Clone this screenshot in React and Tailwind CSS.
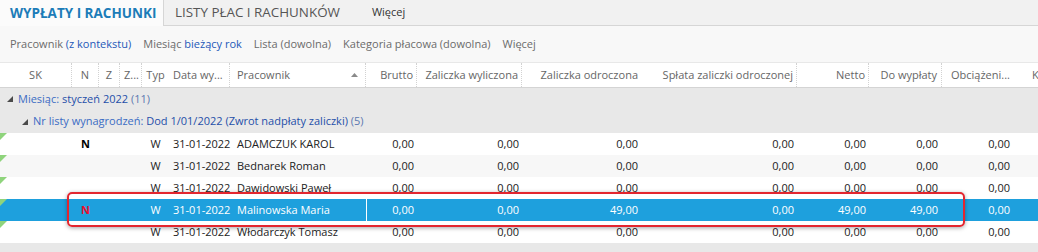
import React from "react";

const columns = [
  { key: "sk", label: "SK", w: "w-[72px]", align: "justify-center", sep: true },
  { key: "n", label: "N", w: "w-[27px]", align: "justify-center", sep: true },
  { key: "z", label: "Z", w: "w-[21px]", align: "justify-center", sep: true },
  { key: "z2", label: "Z...", w: "w-[22px]", align: "justify-start pl-[4px]", sep: true },
  { key: "typ", label: "Typ", w: "w-[27px]", align: "justify-center" },
  { key: "data", label: "Data wy...", w: "w-[61px]", align: "justify-start pl-[4px]", sep: true },
  { key: "prac", label: "Pracownik", w: "w-[136px]", align: "justify-start pl-[7px]", sep: true, sort: true },
  { key: "brutto", label: "Brutto", w: "w-[51px]", align: "justify-end pr-[3px]", sep: true },
  { key: "zalw", label: "Zaliczka wyliczona", w: "w-[105px]", align: "justify-end pr-[3px]", sep: true },
  { key: "zalo", label: "Zaliczka odroczona", w: "w-[119px]", align: "justify-end pr-[3px]" },
  { key: "splata", label: "Spłata zaliczki odroczonej", w: "w-[156px]", align: "justify-end pr-[3px]", sep: true },
  { key: "netto", label: "Netto", w: "w-[72px]", align: "justify-end pr-[3px]", sep: true },
  { key: "dowyp", label: "Do wypłaty", w: "w-[73px]", align: "justify-end pr-[4px]", sep: true },
  { key: "obc", label: "Obciążeni...", w: "w-[84px]", align: "justify-end pr-[16px]" },
  { key: "k", label: "K", w: "flex-1", align: "justify-start pl-[6px]" },
];

const zero = { brutto: "0,00", zalw: "0,00", zalo: "0,00", splata: "0,00", netto: "0,00", dowyp: "0,00", obc: "0,00" };

const rows = [
  { n: "N", typ: "W", data: "31-01-2022", prac: "ADAMCZUK KAROL", ...zero },
  { typ: "W", data: "31-01-2022", prac: "Bednarek Roman", ...zero, alt: true },
  { typ: "W", data: "31-01-2022", prac: "Dawidowski Paweł", ...zero },
  { n: "N", typ: "W", data: "31-01-2022", prac: "Malinowska Maria", ...zero, zalo: "49,00", netto: "49,00", dowyp: "49,00", selected: true },
  { typ: "W", data: "31-01-2022", prac: "Włodarczyk Tomasz", ...zero },
];

function Expander() {
  return (
    <svg width="6" height="6" viewBox="0 0 6 6" className="shrink-0">
      <polygon points="6,0 6,6 0,6" fill="#4a4a4a" />
    </svg>
  );
}

function RowMarker() {
  return (
    <svg width="7" height="7" viewBox="0 0 7 7" className="absolute left-0 top-0">
      <polygon points="0,0 7,0 0,7" fill="#8fd47c" />
    </svg>
  );
}

export default function App() {
  return (
    <div className="relative h-[252px] w-[1038px] overflow-hidden bg-[#e8e8e8] text-[11px] font-['Open_Sans',sans-serif]">
      {/* tabs */}
      <div className="flex h-[26px] items-stretch border-b border-[#d6d6d6] bg-[#f1f1f1]">
        <div className="-mb-px flex w-[164px] items-center border-r border-[#d6d6d6] bg-[#fbfbfb] pl-[10px] text-[13.5px] font-bold text-[#1c7cb8]">
          WYPŁATY I RACHUNKI
        </div>
        <div className="flex items-center pl-[11px] text-[13.4px] text-[#555]">LISTY PŁAC I RACHUNKÓW</div>
        <div className="flex items-center pl-[32px] text-[11px] text-[#333]">Więcej</div>
      </div>

      {/* filters */}
      <div className="flex h-[36px] items-center gap-[12px] bg-[#f8f8f8] pl-[10px] text-[#6b6b6b]">
        <span>
          Pracownik <span className="text-[#2458b8]">(z kontekstu)</span>
        </span>
        <span>
          Miesiąc <span className="text-[#2458b8]">bieżący rok</span>
        </span>
        <span>Lista (dowolna)</span>
        <span>Kategoria płacowa (dowolna)</span>
        <span>Więcej</span>
      </div>

      {/* header */}
      <div className="mt-px flex h-[25px] border-b border-[#d4d4d4] bg-white text-[#666]">
        {columns.map((c) => (
          <div
            key={c.key}
            className={`flex shrink-0 items-center whitespace-nowrap ${c.w} ${c.align} ${
              c.sep ? "border-r border-dotted border-[#d2d2d2]" : ""
            }`}
          >
            {c.sort ? (
              <div className="flex w-full items-center justify-between pr-[7px]">
                <span>{c.label}</span>
                <svg width="7" height="4" viewBox="0 0 7 4">
                  <polygon points="3.5,0 7,4 0,4" fill="#8a8a8a" />
                </svg>
              </div>
            ) : (
              c.label
            )}
          </div>
        ))}
      </div>

      {/* groups */}
      <div className="flex h-[22px] items-center gap-[5px] pl-[7px] text-[#3b6cc4]">
        <Expander />
        <span>
          Miesiąc: <span className="text-[#1f4fa8]">styczeń 2022</span> <span className="text-[#5b78b0]">(11)</span>
        </span>
      </div>
      <div className="flex h-[23px] items-center gap-[5px] pl-[22px] text-[#3b6cc4]">
        <Expander />
        <span>
          Nr listy wynagrodzeń: <span className="text-[#1f4fa8]">Dod 1/01/2022 (Zwrot nadpłaty zaliczki)</span>{" "}
          <span className="text-[#5b78b0]">(5)</span>
        </span>
      </div>

      {/* data rows */}
      {rows.map((r, i) => (
        <div
          key={i}
          className={`relative flex h-[22px] ${
            r.selected ? "bg-[#1ea0dd] text-white" : r.alt ? "bg-[#f7f7f7] text-[#222]" : "bg-white text-[#222]"
          }`}
        >
          <RowMarker />
          {columns.map((c) => {
            let val = r[c.key] || "";
            let extra = "";
            if (c.key === "n" && val) extra = r.selected ? "font-bold text-[#e8112d]" : "font-bold text-black";
            if (c.key === "brutto" && r.selected) extra = "border-l border-white";
            return (
              <div key={c.key} className={`flex shrink-0 items-center whitespace-nowrap ${c.w} ${c.align} ${extra}`}>
                {val}
              </div>
            );
          })}
        </div>
      ))}

      {/* highlight frame */}
      <div className="pointer-events-none absolute left-[67px] top-[192px] h-[35px] w-[898px] rounded-[5px] border-2 border-[#e3262f] shadow-[0_1px_4px_rgba(0,0,0,0.35)]" />
    </div>
  );
}
